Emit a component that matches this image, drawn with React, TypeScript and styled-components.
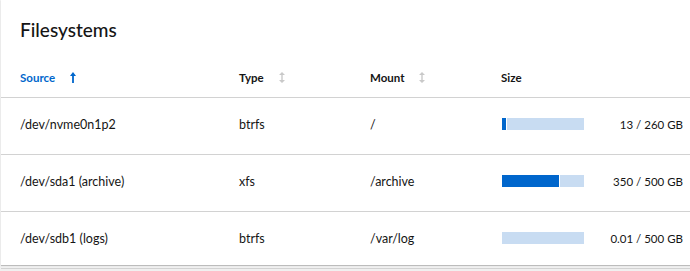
import styled, { createGlobalStyle } from "styled-components";

interface IFilesystem {
    source: string;
    type: string;
    mount: string;
    used: number;
    total: number;
    label: string;
}

const filesystems: IFilesystem[] = [
    { source: "/dev/nvme0n1p2", type: "btrfs", mount: "/", used: 13, total: 260, label: "13 / 260 GB" },
    { source: "/dev/sda1 (archive)", type: "xfs", mount: "/archive", used: 350, total: 500, label: "350 / 500 GB" },
    { source: "/dev/sdb1 (logs)", type: "btrfs", mount: "/var/log", used: 0.01, total: 500, label: "0.01 / 500 GB" },
];

const GlobalStyle = createGlobalStyle`
  html, body {
    margin: 0;
    padding: 0;
    background: #f0f0f0;
    overflow: hidden;
  }
  body {
    font-family: Lato, "Noto Sans", sans-serif;
    color: #151515;
  }
`

function SortUp() {
    return (
        <svg width="6" height="11" viewBox="0 0 6 11">
            <path d="M3 0 L6 4 L3.9 4 L3.9 11 L2.1 11 L2.1 4 L0 4 Z" fill="#0066cc" />
        </svg>
    )
}

function SortBoth() {
    return (
        <svg width="6" height="11" viewBox="0 0 6 11">
            <path d="M3 0 L6 3 L3.7 3 L3.7 8 L6 8 L3 11 L0 8 L2.3 8 L2.3 3 L0 3 Z" fill="#c9c9c9" />
        </svg>
    )
}

function UsageBar({ used, total }: { used: number; total: number }) {
    const pct = (used / total) * 100;
    const visible = pct >= 0.5;
    return (
        <Track>
            {visible && <Fill style={{ width: `${pct}%` }} />}
            {visible && <Gap />}
            <Rest />
        </Track>
    )
}

function App() {
    return (
        <>
            <GlobalStyle />
            <Page>
                <Card>
                    <Title>Filesystems</Title>
                    <Table>
                        <HeadRow>
                            <Head $active>Source <SortUp /></Head>
                            <Head>Type <SortBoth /></Head>
                            <Head>Mount <SortBoth /></Head>
                            <Head>Size</Head>
                        </HeadRow>
                        {filesystems.map(fs => (
                            <Row key={fs.source}>
                                <Cell>{fs.source}</Cell>
                                <Cell>{fs.type}</Cell>
                                <Cell>{fs.mount}</Cell>
                                <SizeCell>
                                    <UsageBar used={fs.used} total={fs.total} />
                                    <Amount>{fs.label}</Amount>
                                </SizeCell>
                            </Row>
                        ))}
                    </Table>
                </Card>
            </Page>
        </>
    )
}

export default App;


const Page = styled.div`
  width: 720px;
  padding-left: 1px;
  height: 271px;
`
const Card = styled.section`
  background: #ffffff;
  box-shadow: 0 1px 1px rgba(3, 3, 3, 0.12), 0 1px 0 #d6d6d6;
  height: 265px;
`
const Title = styled.h2`
  margin: 0;
  padding: 15px 19px 11px;
  font-family: Lato, "Noto Sans", sans-serif;
  font-weight: 500;
  font-size: 19px;
  line-height: 30px;
  height: 30px;
`
const Table = styled.div`
  display: grid;
  grid-template-columns: 19px 219px 131px 131px 182px 1fr;
`
const HeadRow = styled.div`
  grid-column: 1 / -1;
  display: grid;
  grid-template-columns: subgrid;
  height: 41px;
  border-bottom: 1px solid #d2d2d2;
  & > :first-child { grid-column: 2; }
`
const Head = styled.div<{ $active?: boolean }>`
  display: flex;
  align-items: center;
  gap: 15px;
  padding-top: 1px;
  font-size: 11.5px;
  font-weight: 700;
  color: ${p => p.$active ? "#0066cc" : "#151515"};
`
const Row = styled.div`
  grid-column: 1 / -1;
  display: grid;
  grid-template-columns: subgrid;
  height: 56px;
  border-bottom: 1px solid #d2d2d2;
  & > :first-child { grid-column: 2; }
`
const Cell = styled.div`
  display: flex;
  align-items: center;
  font-size: 12.5px;
  padding-bottom: 3px;
`
const SizeCell = styled.div`
  display: flex;
  align-items: center;
  justify-content: space-between;
  padding-bottom: 4px;
`
const Track = styled.div`
  width: 82px;
  height: 12px;
  display: flex;
  padding-left: 1px;
`
const Fill = styled.div`
  background: #0066cc;
  flex: none;
`
const Gap = styled.div`
  width: 1px;
  background: #ffffff;
  flex: none;
`
const Rest = styled.div`
  flex: 1;
  background: #c8dcf2;
`
const Amount = styled.span`
  font-size: 11.5px;
  color: #151515;
`
